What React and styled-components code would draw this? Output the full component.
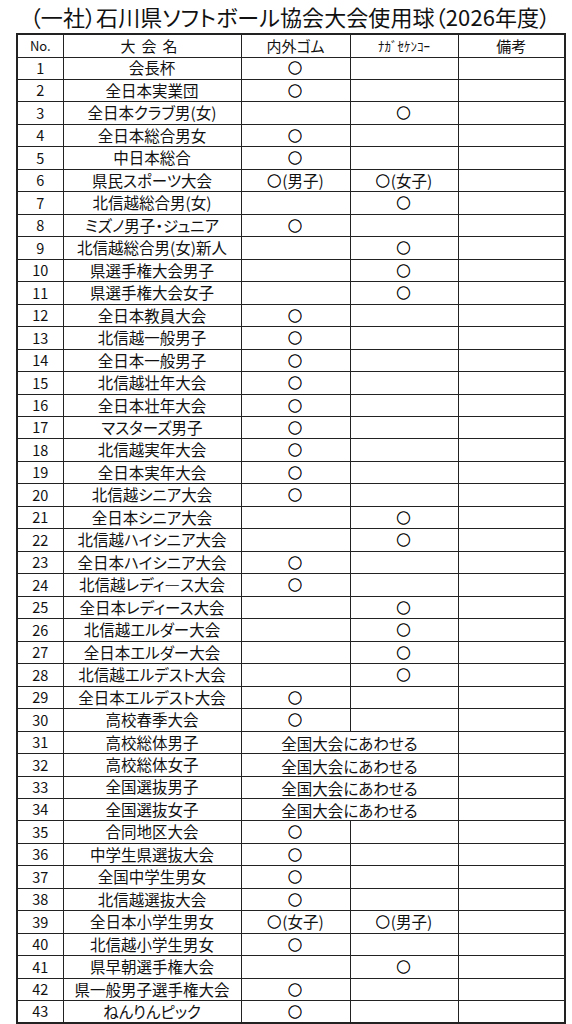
import React from 'react';
import styled, { createGlobalStyle } from 'styled-components';

const GlobalStyle = createGlobalStyle`
    body {
        margin: 0;
        background: #fff;
        color: #111;
        font-family: "Noto Sans CJK JP", "Noto Sans", sans-serif;
    }
`;

const Page = styled.div`
    width: 572px;
    padding: 0 8px 0 16px;
    box-sizing: border-box;
`;

const Title = styled.h1`
    margin: 0;
    height: 33px;
    line-height: 33px;
    font-size: 22px;
    font-weight: 400;
    text-align: center;
    letter-spacing: 0.1px;
    font-feature-settings: "palt";
`;

const Table = styled.table`
    width: 548px;
    table-layout: fixed;
    border-collapse: collapse;
    border: 2px solid #222;
`;

const HeadRow = styled.tr`
    height: 23px;
`;

const BodyRow = styled.tr`
    height: 22.47px;
`;

const HeadCell = styled.th`
    border: 1px solid #222;
    padding: 0;
    font-size: ${props => props.small ? '13px' : '15px'};
    font-weight: 400;
    line-height: 1;
    text-align: center;
    letter-spacing: ${props => props.spaced ? '0.4em' : '0'};
    font-feature-settings: "palt";
`;

const Cell = styled.td`
    border: 1px solid #222;
    padding: 0;
    font-size: ${props => props.num ? '14.5px' : '15.5px'};
    line-height: 1;
    text-align: center;
    white-space: nowrap;
    overflow: hidden;
    font-feature-settings: "palt";
    padding-top: ${props => props.low ? '3px' : '0'};
`;

const Mark = styled.span`
    display: inline-block;
    font-size: 14px;
    margin-right: 1px;
    vertical-align: 1px;
    -webkit-text-stroke: 0.5px #111;
`;

const withMark = text => {
    if (!text || text[0] !== '○') return text;
    return (
        <>
            <Mark>○</Mark>
            {text.slice(1)}
        </>
    );
};

const rows = [
    ['会長杯', '○', ''],
    ['全日本実業団', '○', ''],
    ['全日本クラブ男(女)', '', '○'],
    ['全日本総合男女', '○', ''],
    ['中日本総合', '○', ''],
    ['県民スポーツ大会', '○(男子)', '○(女子)'],
    ['北信越総合男(女)', '', '○'],
    ['ミズノ男子・ジュニア', '○', ''],
    ['北信越総合男(女)新人', '', '○'],
    ['県選手権大会男子', '', '○'],
    ['県選手権大会女子', '', '○'],
    ['全日本教員大会', '○', ''],
    ['北信越一般男子', '○', ''],
    ['全日本一般男子', '○', ''],
    ['北信越壮年大会', '○', ''],
    ['全日本壮年大会', '○', ''],
    ['マスターズ男子', '○', ''],
    ['北信越実年大会', '○', ''],
    ['全日本実年大会', '○', ''],
    ['北信越シニア大会', '○', ''],
    ['全日本シニア大会', '', '○'],
    ['北信越ハイシニア大会', '', '○'],
    ['全日本ハイシニア大会', '○', ''],
    ['北信越レディ―ス大会', '○', ''],
    ['全日本レディース大会', '', '○'],
    ['北信越エルダー大会', '', '○'],
    ['全日本エルダー大会', '', '○'],
    ['北信越エルデスト大会', '', '○'],
    ['全日本エルデスト大会', '○', ''],
    ['高校春季大会', '○', ''],
    ['高校総体男子', null],
    ['高校総体女子', null],
    ['全国選抜男子', null],
    ['全国選抜女子', null],
    ['合同地区大会', '○', ''],
    ['中学生県選抜大会', '○', ''],
    ['全国中学生男女', '○', ''],
    ['北信越選抜大会', '○', ''],
    ['全日本小学生男女', '○(女子)', '○(男子)'],
    ['北信越小学生男女', '○', ''],
    ['県早朝選手権大会', '', '○'],
    ['県一般男子選手権大会', '○', ''],
    ['ねんりんピック', '○', ''],
];

export default function App() {
    return (
        <Page>
            <GlobalStyle />
            <Title>（一社）石川県ソフトボール協会大会使用球（2026年度）</Title>
            <Table>
                <colgroup>
                    <col style={{ width: 46 }} />
                    <col style={{ width: 178 }} />
                    <col style={{ width: 109 }} />
                    <col style={{ width: 108 }} />
                    <col style={{ width: 107 }} />
                </colgroup>
                <thead>
                    <HeadRow>
                        <HeadCell small>No.</HeadCell>
                        <HeadCell spaced>大会名</HeadCell>
                        <HeadCell>内外ゴム</HeadCell>
                        <HeadCell small>ﾅｶﾞｾｹﾝｺｰ</HeadCell>
                        <HeadCell>備考</HeadCell>
                    </HeadRow>
                </thead>
                <tbody>
                    {rows.map(([name, a, b], i) => (
                        <BodyRow key={i}>
                            <Cell num>{i + 1}</Cell>
                            <Cell>{name}</Cell>
                            {a === null ? (
                                <Cell colSpan={2} low>全国大会にあわせる</Cell>
                            ) : (
                                <>
                                    <Cell>{withMark(a)}</Cell>
                                    <Cell>{withMark(b)}</Cell>
                                </>
                            )}
                            <Cell />
                        </BodyRow>
                    ))}
                </tbody>
            </Table>
        </Page>
    );
}
